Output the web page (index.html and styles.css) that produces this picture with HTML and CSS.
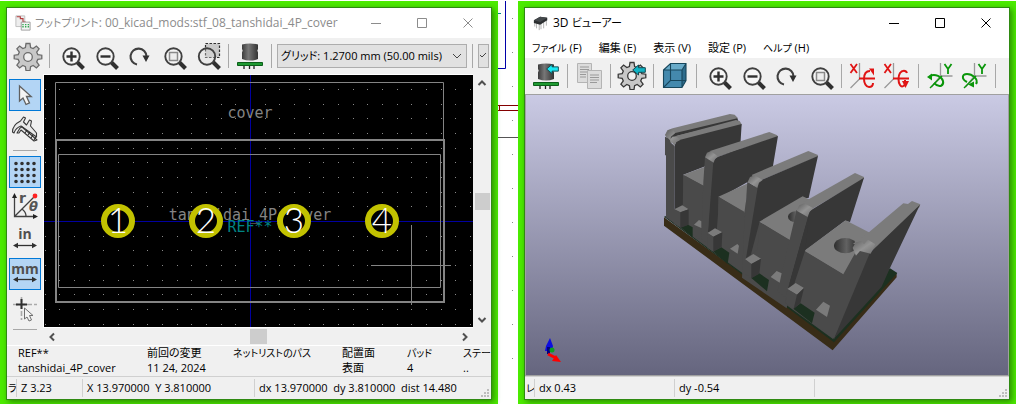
FILE: index.html
```
<!DOCTYPE html>
<html lang="ja">
<head>
<meta charset="utf-8">
<title>フットプリント / 3D ビューアー</title>
<link rel="stylesheet" href="styles.css">
</head>
<body>
<svg class="defs" aria-hidden="true">
  <defs>
    <linearGradient id="metal"><stop offset="0" stop-color="#3c3c3c"/><stop offset=".4" stop-color="#777"/><stop offset="1" stop-color="#333"/></linearGradient>
    <linearGradient id="sky" x1="0" y1="0" x2="0" y2="1"><stop offset="0" stop-color="#cacae4"/><stop offset="1" stop-color="#65657e"/></linearGradient>
    <linearGradient id="hole"><stop offset="0" stop-color="#2e2e2e"/><stop offset=".55" stop-color="#626262"/><stop offset="1" stop-color="#333"/></linearGradient>
    <linearGradient id="bevel" x1="0" y1="0" x2="1" y2="1"><stop offset="0" stop-color="#5c5c5c"/><stop offset=".5" stop-color="#949494"/><stop offset="1" stop-color="#6a6a6a"/></linearGradient>
    <pattern id="grid" x="206" y="89" width="44" height="44" patternUnits="userSpaceOnUse">
      <path fill="#8a8a8a" d="M0 0h1v1H0zM15 0h1v1h-1zM29 0h1v1h-1zM0 15h1v1H0zM15 15h1v1h-1zM29 15h1v1h-1zM0 29h1v1H0zM15 29h1v1h-1zM29 29h1v1h-1z"/>
    </pattern>
  </defs>
  <symbol id="i-gear" viewBox="0 0 32 32"><path d="M14 4.500h4l.6 4 2.600 1.100 3.200-2.500 2.700 2.700-2.400 3.300 1.100 2.500 4 .6v3.600l-4 .6-1.100 2.600 2.400 3.200-2.700 2.700-3.200-2.400-2.600 1.100-.6 4h-4l-.6-4-2.600-1.100-3.200 2.400-2.700-2.700 2.400-3.200-1.100-2.600-4-.6v-3.600l4-.6 1.100-2.500-2.400-3.300 2.700-2.700 3.200 2.500 2.600-1.100z" fill="#c8c8c8" stroke="currentColor" stroke-width="1.300"/><circle cx="16" cy="18" r="4.300" fill="#f0f0f0" stroke="currentColor" stroke-width="1.300"/></symbol>
  <symbol id="i-lens" viewBox="0 0 32 32"><path d="M22 22l6.500 6.500" stroke="#303030" stroke-width="4"/><circle cx="16.500" cy="16.500" r="8.200" fill="#f7f7f7" fill-opacity=".7" stroke="#404040" stroke-width="1.900"/></symbol>
  <symbol id="i-in" viewBox="0 0 32 32"><use href="#i-lens"/><path d="M11.500 16.500h10M16.500 11.500v10" stroke="#303030" stroke-width="2.400"/></symbol>
  <symbol id="i-out" viewBox="0 0 32 32"><use href="#i-lens"/><path d="M11.500 16.500h10" stroke="#303030" stroke-width="2.400"/></symbol>
  <symbol id="i-redo" viewBox="0 0 32 32"><path d="M14 24.500a8 8 0 1 1 9.500-8" fill="none" stroke="#404040" stroke-width="2.100"/><path d="M19.500 15.500h7l-3.500 6.500z" fill="#303030"/></symbol>
  <symbol id="i-fit" viewBox="0 0 32 32"><use href="#i-lens"/><path d="M12.500 12.500h8v8h-8z" fill="#ededed" stroke="#8a8a8a" stroke-width="1.500"/></symbol>
  <symbol id="i-area" viewBox="0 0 32 32"><path d="M14.500 3.500h14v14h-14z" fill="#c9c9c9" stroke="#303030" stroke-width="1.200" stroke-dasharray="2.500 1.500"/><path d="M22 22l6.500 6.500" stroke="#303030" stroke-width="4"/><circle cx="16" cy="16.500" r="8.200" fill="#ddd" fill-opacity=".35" stroke="#404040" stroke-width="1.900"/></symbol>
  <symbol id="i-part" viewBox="0 0 32 32"><path d="M10 23v6M15.500 23v6M20 23v6" stroke="#222" stroke-width="1.300"/><path d="M8 4.500q8-2 16 0V9l-.7 1.500.7 2V19q-8 3-16 0v-6.500l.7-2L8 9z" fill="url(#metal)"/><path d="M3.500 22.500h25v3h-25z" fill="#1f9a32" stroke="#0c5f1a"/></symbol>
  <symbol id="i-back" viewBox="0 0 14 12"><path d="M.7 6l5.800-5v2.700h6.800v4.600H6.500V11z" fill="currentColor" stroke="#124850"/></symbol>
  <symbol id="i-copy" viewBox="0 0 32 32"><g fill="#dcdcdc" stroke="#b4b4b4"><path d="M4.500 3.500h14v19h-14z"/><path d="M14.500 10.500h14v18h-14z"/></g><path d="M7 7h9M7 9.500h9M7 12h7M7 14.500h6M7 17h6M17 15h9M17 17.500h9M17 20h9M17 22.500h7" stroke="#999" stroke-width="1.200"/></symbol>
  <symbol id="i-cube" viewBox="0 0 32 32"><path d="M4.500 10l7-6.500H27L23 10z" fill="#69abc9"/><path d="M4.500 10H23v17.500H4.500z" fill="#4489ad"/><path d="M23 10l4-6.500v17l-4 7z" fill="#2d6c8c"/><path d="M4.500 10l7-6.500H27v17l-4 7H4.500zM4.500 10H23l4-6.500M23 10v17.500M11.500 3.500v17l-7 7M11.500 20.500H27" fill="none" stroke="#17465c" stroke-width="1.100"/></symbol>
  <symbol id="i-rx" viewBox="0 0 32 32"><path d="M12.500 3v16l-9 9" fill="none" stroke="#999" stroke-width="1.300"/><path d="M3.500 4l6.500 9M10 4l-6.500 9M12 18.500h16" stroke="#e01414" stroke-width="1.800"/></symbol>
  <symbol id="i-ry" viewBox="0 0 32 32"><path d="M16.500 3v13h12M16.500 16l-9 11" fill="none" stroke="#999" stroke-width="1.300"/><path d="M20.500 4l3.500 5 3.500-5M24 9v5" fill="none" stroke="#0a960a" stroke-width="1.800"/><path d="M6 28L18 16" stroke="#0a960a" stroke-width="1.400"/></symbol>
  <symbol id="i-cursor" viewBox="0 0 32 32"><path d="M10.500 7v15l3.500-3 3 6.500 3.500-1.600-3-6.400h4.700z" fill="#f4f4f4" stroke="#606060" stroke-width="1.300"/></symbol>
</svg>

<main class="desktop">
  <section class="frame" aria-label="フットプリント">
    <div class="window">
      <header class="titlebar inactive">
        <svg class="app" viewBox="0 0 18 18"><path d="M1 1h10v12H1z" fill="#eee" stroke="#bbb"/><path d="M2 2h4v2h3v4h3" fill="none" stroke="#b13c3c" stroke-width="1.300"/><path d="M7 8h10v9H7z" fill="#f4f4f4" stroke="#999"/><path d="M9 10v5M12 10v5M15 10v5" stroke="#35a853" stroke-width="1.600" stroke-dasharray="1.500 1"/></svg>
        <h1><span class="ja">フットプリント</span>: 00_kicad_mods:stf_08_tanshidai_4P_cover</h1>
        <button aria-label="最小化"><svg viewBox="0 0 10 10"><path d="M0 5.500h10"/></svg></button>
        <button aria-label="最大化"><svg viewBox="0 0 10 10"><path d="M.5.5h9v9h-9z"/></svg></button>
        <button aria-label="閉じる"><svg viewBox="0 0 10 10"><path d="M.5.5l9 9M9.500.5l-9 9"/></svg></button>
      </header>
      <div class="toolbar" role="toolbar">
        <button aria-label="設定"><svg class="gear"><use href="#i-gear" y="-1"/></svg></button>
        <i class="sep"></i>
        <button aria-label="ズームイン"><svg><use href="#i-in"/></svg></button>
        <button aria-label="ズームアウト"><svg><use href="#i-out"/></svg></button>
        <button aria-label="再描画"><svg><use href="#i-redo"/></svg></button>
        <button aria-label="全体表示"><svg><use href="#i-fit"/></svg></button>
        <button aria-label="範囲ズーム"><svg><use href="#i-area"/></svg></button>
        <i class="sep"></i>
        <button aria-label="3D ビューアー"><svg><use href="#i-part"/></svg></button>
        <i class="sep"></i>
        <select class="grid-select" aria-label="グリッド"><option>グリッド: 1.2700 mm (50.00 mils)</option></select>
        <i class="sep"></i>
        <select class="zoom-select" aria-label="ズーム"><option></option></select>
      </div>
      <div class="workspace">
        <div class="sidebar" role="toolbar">
          <button class="on" aria-label="選択"><svg><use href="#i-cursor"/></svg></button>
          <button aria-label="計測"><svg viewBox="0 0 32 32"><g fill="#e8e8e8" stroke="#383838" stroke-width="1.100" stroke-linejoin="round"><path d="M3.500 19c0-5 4-9 8-11l3-4 2 1-2 4 3 3 3-5 2 1-1 5 6 7v4L12 13c-3 1-6 4-7 7z"/><path d="M8 20l3-5 2-1 15 13-3 1-13-11-2 3z"/></g><path d="M16 20l2-3M19 22l2-3M22 25l2-3M25 27l2-3" stroke="#222"/></svg></button>
          <i class="hsep"></i>
          <button class="on" aria-label="グリッド表示"><svg viewBox="0 0 32 32"><path d="M7 7.500h20M7 13.500h20M7 19.500h20M7 25.500h20" stroke="#303030" stroke-width="3.600" stroke-linecap="round" stroke-dasharray="0 6"/></svg></button>
          <button aria-label="極座標"><svg viewBox="0 0 32 32"><path d="M5.500 6v20.500H27M5.500 26.500L25 7M13 19q4 3 4 7" fill="none" stroke="#404040" stroke-width="1.300"/><path d="M5.500 3l2.500 5H3zM29 26.500L24 24v5z" fill="#222"/><circle cx="26" cy="6" r="2.400" fill="#f22"/><text x="10" y="13" class="glyph">r</text><text x="20" y="21" class="glyph it">θ</text></svg></button>
          <button aria-label="インチ"><svg viewBox="0 0 32 32"><text x="16" y="15" class="unit">in</text><path d="M6 21.500h20" stroke="#303030" stroke-width="1.300"/><path d="M4 21.500l5-2.700v5.400zM28 21.500l-5-2.700v5.400z" fill="#303030"/></svg></button>
          <button class="on" aria-label="ミリメートル"><svg viewBox="0 0 32 32"><text x="16" y="16" class="unit">mm</text><path d="M6 21.500h20" stroke="#303030" stroke-width="1.300"/><path d="M4 21.500l5-2.700v5.400zM28 21.500l-5-2.700v5.400z" fill="#303030"/></svg></button>
          <button aria-label="カーソル形状"><svg viewBox="0 0 32 32"><path d="M4 12.500h24M12.500 5v23" stroke="#aaa" stroke-width="1.600" stroke-dasharray="5 2"/><path d="M7 12.500h11M12.500 7v10" stroke="#303030" stroke-width="2"/><path d="M15.500 16v11l2.500-2 2 4 2.500-1-2-4.500h3.500z" fill="#f4f4f4" stroke="#707070"/></svg></button>
          <i class="hsep"></i>
        </div>
        <svg class="pcb" viewBox="44 75 429 260" preserveAspectRatio="xMinYMin slice" role="img" aria-label="フットプリント図">
          <path fill="#000" d="M44 75h429v260H44z"/>
          <path fill="url(#grid)" d="M44 75h429v260H44z"/>
          <path d="M44 221.500h429M250.500 75v260" stroke="#0000a0"/>
          <text x="250" y="118" class="silk">cover</text>
          <text x="250" y="220" class="silk">tanshidai_4P_cover</text>
          <g fill="none" stroke="#848484">
            <path d="M55.500 139V82.500h388V139M58.500 154.500h382v133h-382z"/>
            <path stroke-width="2" d="M56 140h388v162H56z"/>
            <path d="M411.500 225v80M371 265.500h80"/>
          </g>
          <text x="250" y="232" class="silk ref">REF**</text>
          <g fill="#000" stroke="#c2c200" stroke-width="6"><circle cx="118" cy="221" r="14"/><circle cx="206" cy="221" r="14"/><circle cx="294" cy="221" r="14"/><circle cx="382" cy="221" r="14"/></g>
          <g class="pads"><text x="118" y="233">1</text><text x="206" y="233">2</text><text x="294" y="233">3</text><text x="382" y="233">4</text></g>
        </svg>
        <div class="vscroll"><button aria-label="上へ"><svg viewBox="0 0 10 10"><path d="M1.500 7L5 3.500 8.500 7"/></svg></button><i></i><button aria-label="下へ"><svg viewBox="0 0 10 10"><path d="M1.500 3L5 6.500 8.500 3"/></svg></button></div>
        <div class="hscroll"><button aria-label="左へ"><svg viewBox="0 0 10 10"><path d="M7 1.500L3.500 5 7 8.500"/></svg></button><i></i><button aria-label="右へ"><svg viewBox="0 0 10 10"><path d="M3 1.500L6.500 5 3 8.500"/></svg></button></div>
      </div>
      <dl class="messages">
        <div><dt>REF**</dt><dd>tanshidai_4P_cover</dd></div>
        <div><dt>前回の変更</dt><dd>11 24, 2024</dd></div>
        <div><dt class="ja">ネットリストのパス</dt><dd></dd></div>
        <div><dt>配置面</dt><dd>表面</dd></div>
        <div><dt class="ja">パッド</dt><dd>4</dd></div>
        <div><dt class="ja">ステー</dt><dd>..</dd></div>
      </dl>
      <footer class="status status-a"><span class="ja">ラ</span><span>Z 3.23</span><span>X 13.970000&nbsp; Y 3.810000</span><span>dx 13.970000&nbsp; dy 3.810000&nbsp; dist 14.480</span>
        <svg class="grip" viewBox="0 0 8 8"><path d="M6 0h2v2H6zM3 3h2v2H3zM6 3h2v2H6zM0 6h2v2H0zM3 6h2v2H3zM6 6h2v2H6z"/></svg></footer>
    </div>
  </section>

  <svg class="gap" viewBox="0 0 20 403" preserveAspectRatio="xMidYMin slice" aria-hidden="true">
    <path d="M0 67.500h7.500V0" fill="none" stroke="#0000a8"/>
    <path d="M0 12.500h3" stroke="#008484"/>
    <path d="M0 104.500h20M0 109.500h20M1.500 104v6" fill="none" stroke="#840000"/>
    <path d="M0 136.500h20" stroke="#555"/>
    <path d="M14.500 17v370" stroke="#888" stroke-dasharray="1 33"/>
  </svg>

  <section class="frame" aria-label="3D ビューアー">
    <div class="window">
      <header class="titlebar">
        <svg class="app" viewBox="0 0 18 18"><path d="M2 7v6M4 9v6M7 9v8M9 8v8M12 7v8M15 5v7" stroke="#aaa"/><path d="M1 6l7-4 8 1v3l-8 5-7-2z" fill="#2c2f31"/><path d="M1 6l7-4 8 1-8 5z" fill="#45494c"/></svg>
        <h1>3D <span class="ja">ビューアー</span></h1>
        <button aria-label="最小化"><svg viewBox="0 0 10 10"><path d="M0 5.500h10"/></svg></button>
        <button aria-label="最大化"><svg viewBox="0 0 10 10"><path d="M.5.5h9v9h-9z"/></svg></button>
        <button aria-label="閉じる"><svg viewBox="0 0 10 10"><path d="M.5.5l9 9M9.500.5l-9 9"/></svg></button>
      </header>
      <nav class="menu"><button><span class="ja">ファイル</span> (F)</button><button>編集 (E)</button><button>表示 (V)</button><button>設定 (P)</button><button><span class="ja">ヘルプ</span> (H)</button></nav>
      <div class="toolbar" role="toolbar">
        <button aria-label="再読み込み"><svg><use href="#i-part"/><use href="#i-back" x="16" y="3" width="13" height="12" color="#19e8f4"/></svg></button>
        <i class="sep"></i>
        <button aria-label="コピー"><svg><use href="#i-copy"/></svg></button>
        <i class="sep"></i>
        <button aria-label="オプション"><svg class="gear dark"><use href="#i-gear" y="-2"/><use href="#i-back" x="16" y="4" width="14" height="12" color="#0fb3c4"/></svg></button>
        <i class="sep"></i>
        <button aria-label="正投影"><svg><use href="#i-cube"/></svg></button>
        <i class="sep"></i>
        <button aria-label="ズームイン"><svg><use href="#i-in"/></svg></button>
        <button aria-label="ズームアウト"><svg><use href="#i-out"/></svg></button>
        <button aria-label="再描画"><svg><use href="#i-redo"/></svg></button>
        <button aria-label="全体表示"><svg><use href="#i-fit"/></svg></button>
        <i class="sep"></i>
        <button aria-label="X 回転"><svg viewBox="0 0 32 32"><use href="#i-rx"/><path d="M23 11c-5 0-6 4-6 8s2 8 5 8 4-2 4-4" fill="none" stroke="#e01414" stroke-width="2"/><path d="M22 8.500h5v7z" fill="#e01414"/></svg></button>
        <button aria-label="X 逆回転"><svg viewBox="0 0 32 32"><use href="#i-rx"/><path d="M26 13c-1-3-5-3-7 0s-2 9 0 12 3 1 5 0v-5" fill="none" stroke="#e01414" stroke-width="2"/><path d="M21 21h7l-3.500 7z" fill="#e01414"/></svg></button>
        <i class="sep"></i>
        <button aria-label="Y 回転"><svg viewBox="0 0 32 32"><use href="#i-ry"/><path d="M6 16c5-3 12 1 13 5s-3 8-9 2" fill="none" stroke="#0a960a" stroke-width="2"/><path d="M3 17l5-3.500v7z" fill="#0a960a"/></svg></button>
        <button aria-label="Y 逆回転"><svg viewBox="0 0 32 32"><use href="#i-ry"/><path d="M9 22c-6-3-5-8 0-8s12 5 9 10" fill="none" stroke="#0a960a" stroke-width="2"/><path d="M10 24.500l6-3v6z" fill="#0a960a"/></svg></button>
        <i class="sep"></i>
      </div>
      <svg class="view3d" viewBox="526 95 482 281" preserveAspectRatio="xMinYMin slice" role="img" aria-label="3D モデル">
        <path fill="url(#sky)" d="M526 95h482v281H526z"/>
        <g transform="translate(650 100) scale(.3333)">
          <path fill="#382c17" d="M42 352L550 718l190-200v14L548 751 42 377z"/>
          <path fill="#1c3020" d="M42 350l58-20 450 330 170-155 22 14-190 208z"/>
          <path fill="#4a4a4a" d="M75 330l25-105 60 15 45 50 80 10 43 66 80 30 60 56 110 70-28 196L48 352z"/>
          <!-- leftmost double wall -->
          <path fill="#7b7b7b" d="M45 105l7-14 16-6L240 42l14 2 9 9-4 14-180 42-18 24z"/>
          <path fill="#373737" d="M62 110l14-11 186-44 3 8-185 44-17 14z"/>
          <path fill="#7b7b7b" d="M60 118l8-8 10-2 180-48 11 3 6 10-2 8-190 50z"/>
          <path fill="#373737" d="M73 140l4-12 11-8 187-48-5 80-65 15-43 33-62 24-2 115H73z"/>
          <path fill="#4a4a4a" d="M45 110l15 8v8l13 11-1 190 28-5v65L48 352V166h-3z"/>
          <path fill="url(#bevel)" d="M46 105l8-14 13-4 8 12-13 12-2 10zM60 120l7-10 15 2 9 8-12 5-6 12z"/>
          <!-- block and wall 1 -->
          <path fill="#7b7b7b" d="M100 224l65-24v60z"/>
          <path fill="#4a4a4a" d="M100 225l62 33-6 165-56-39z"/>
          <path fill="#7b7b7b" d="M180 153L358 96l24 10v5l-180 60z"/>
          <path fill="#373737" d="M200 172l184-64-16 96-160 90-8 100-26 2 12-210z"/>
          <path fill="#7b7b7b" d="M205 290l92-42-14 90z"/>
          <path fill="#4a4a4a" d="M165 170l25 15-16 210 30 25v35l-50-38 6-170zM205 290l78 45 5 190-86-64z"/>
          <path fill="url(#bevel)" d="M165 172l6-14 12-5 22 17-10 6-4 12z"/>
          <!-- block and wall 2 -->
          <path fill="#7b7b7b" d="M305 225l170-72 29 12-1 5-180 75z"/>
          <path fill="#373737" d="M320 246l184-78-28 126-18 0-130 75-28 105-15 2 25-210z"/>
          <path fill="#7b7b7b" d="M328 365l130-76 30 14-66 120z"/>
          <ellipse fill="url(#hole)" cx="436" cy="350" rx="22" ry="16"/>
          <path fill="#4a4a4a" d="M292 245l31 18-35 212 40-30 92 140-10 40-134-92 6-140zM328 366l93 55-6 170-95-100z"/>
          <path fill="url(#bevel)" d="M293 246l7-15 14-5 24 14-11 8-5 16z"/>
          <!-- block and wall 3 -->
          <path fill="#7b7b7b" d="M455 310l160-91 27 12v5L485 328z"/>
          <path fill="#373737" d="M480 332l162-99-42 133-15-4-122 92-32 100-17 10 55-215z"/>
          <path fill="#7b7b7b" d="M462 453l125-92 74 38 30 30-110 95z"/>
          <ellipse fill="url(#hole)" cx="586" cy="437" rx="34" ry="23"/>
          <path fill="#4a4a4a" d="M440 330l34 20-62 215 52-112 116 70 50-90 40 30-117 253-147-106z"/>
          <path fill="#4a4a4a" d="M440 330l34 20-60 215-2 30-30-20z"/>
          <path fill="#373737" d="M474 352l-60 214 18-12 34-104 10-98z"/>
          <path fill="url(#bevel)" d="M440 332l8-16 15-6 27 15-11 10-6 16z"/>
          <!-- right wall -->
          <path fill="#7b7b7b" d="M655 398l105-88 14 2 12-9 25 10-2 8-134 130-66-20z"/>
          <path fill="#373737" d="M810 314l-90 190-25 56-143 156 108-258z"/>
          <path fill="url(#bevel)" d="M608 443l10-16 16-4 8 10 12-14 22 14-14 28-32-8-12 14z"/>
          <!-- terminal slots -->
          <path fill="#1c3020" d="M92 382l22-8 14 8v30zM190 454l24-12 24 16-5 34zM304 534l24-14 29 20-6 34zM430 626l22-16 42 28-8 32z"/>
          <path fill="#7b7b7b" d="M73 328l24-12 19 12-25 9zM173 399l22-14 22 12-27 13zM285 478l25-16 23 14-29 16zM412 567l25-18 25 15-21 20z"/>
          <path fill="#4a4a4a" d="M73 328l18 9v45l-18-10zM172 399l18 11v45l-18-12zM285 478l19 14v43l-19-14zM412 567l29 17-10 43-24-18z"/>
          <path fill="#373737" d="M91 337l25-9v46l-25 10zM190 410l27-13-2 44-25 14zM304 492l29-16-5 45-24 14zM441 584l21-20-11 46-20 17z"/>
          <path fill="#7b7b7b" d="M132 374l15-14 7 4v20zM240 446l22-14 5 5-4 24zM362 531l18-18 15 7-6 28zM498 629l22-24 20 12-9 34z"/>
        </g>
        <path fill="#0d0de0" d="M550 338l3 8-1 5h-7l1-5z"/><path fill="#000080" d="M547 347h3v7h-3z"/><path d="M548 354l8 4" stroke="#f00" stroke-width="3"/><path fill="#f00" d="M561 362l-9-1 4-6z"/><circle cx="552" cy="350" r="2.500" fill="#0c9f20"/>
      </svg>
      <footer class="status status-b"><span class="ja">レ</span><span>dx 0.43</span><span>dy -0.54</span><span></span>
        <svg class="grip" viewBox="0 0 8 8"><path d="M6 0h2v2H6zM3 3h2v2H3zM6 3h2v2H6zM0 6h2v2H0zM3 6h2v2H3zM6 6h2v2H6z"/></svg></footer>
    </div>
  </section>
</main>
</body>
</html>
```
FILE: styles.css
```
* { box-sizing: border-box; }

body {
  margin: 0;
  background: #fff;
  color: #000;
  font: 11px/16px "Open Sans", "Noto Sans CJK JP", sans-serif;
  font-feature-settings: "palt";
}

button, select {
  margin: 0;
  padding: 0;
  border: 0;
  background: none;
  color: inherit;
  font: inherit;
  font-feature-settings: inherit;
}

.defs { position: absolute; width: 0; height: 0; }
.ja { font-size: 10px; }

.desktop {
  display: flex;
  min-height: 100vh;
  padding-top: 1px;
  background: #fff;
}

.frame {
  flex: 1;
  min-width: 0;
  display: flex;
  padding: 7px 7px 5px;
  background: #4ceb00;
}

.gap { flex: none; width: 20px; contain: size; }

.window {
  flex: 1;
  min-width: 0;
  display: flex;
  flex-direction: column;
  overflow: hidden;
  background: #f0f0f0;
  box-shadow: 0 0 0 1px #2f8a12, 2px 2px 6px 1px #2c8a00;
}

.titlebar {
  display: flex;
  align-items: center;
  flex: none;
  height: 30px;
  padding-left: 8px;
  background: #fff;
}
.titlebar h1 {
  flex: 1;
  min-width: 0;
  margin: 0 0 0 4px;
  overflow: hidden;
  font-size: 12px;
  font-weight: 400;
  white-space: nowrap;
}
.titlebar .app { width: 16px; height: 16px; }
.titlebar .ja { font-size: 11px; }
.titlebar button { flex: none; width: 46px; height: 28px; display: grid; place-items: center; }
.titlebar button svg { width: 10px; height: 10px; fill: none; stroke: #000; }
.inactive { color: #8c8c8c; }
.inactive button svg { stroke: #8c8c8c; }

.menu {
  display: flex;
  align-items: center;
  flex: none;
  gap: 17px;
  height: 20px;
  padding: 0 7px;
  background: #fff;
}

.toolbar {
  display: flex;
  flex: none;
  align-items: center;
  gap: 2px;
  height: 36px;
  padding-left: 5px;
  overflow: hidden;
}
.toolbar button { flex: none; width: 32px; height: 32px; }
.toolbar button svg { display: block; width: 32px; height: 32px; }
.toolbar .gear { color: #6c6c6c; }
.toolbar .dark { color: #383838; }
.sep { flex: none; width: 1px; height: 24px; margin: 0 3px; background: #a8a8a8; }

.grid-select, .zoom-select {
  flex: none;
  height: 24px;
  border: 1px solid #adadad;
  background: #e1e1e1 no-repeat right 5px center;
  appearance: none;
}
.grid-select {
  width: 190px;
  padding-left: 3px;
  background-image: url("data:image/svg+xml,%3Csvg xmlns='http://www.w3.org/2000/svg' width='8' height='6'%3E%3Cpath d='M0 1l4 4 4-4' fill='none' stroke='%23444'/%3E%3C/svg%3E");
}
.zoom-select {
  width: 11px;
  background-position: center;
  background-image: url("data:image/svg+xml,%3Csvg xmlns='http://www.w3.org/2000/svg' width='7' height='6'%3E%3Cpath d='M0 2l2 2 4-4' fill='none' stroke='%23444'/%3E%3C/svg%3E");
}

.workspace {
  flex: 1;
  min-height: 0;
  display: grid;
  grid-template: minmax(0, 1fr) 17px / 36px minmax(0, 1fr) 18px;
}
.sidebar {
  grid-row: 1 / 3;
  display: flex;
  flex-direction: column;
  gap: 2px;
  padding: 5px 2px 0;
}
.sidebar button { flex: none; width: 32px; height: 32px; }
.sidebar button svg { display: block; width: 32px; height: 32px; }
.sidebar .on { background: #b3d5f5; box-shadow: inset 0 0 0 1px #0078d7; }
.hsep { flex: none; height: 1px; margin: 3px 4px; background: #a8a8a8; }
.glyph { fill: #555; font: 700 14px "DejaVu Sans", sans-serif; }
.it { font-style: italic; font-size: 13px; }
.unit { fill: #505050; font: 700 14px "Open Sans", sans-serif; text-anchor: middle; }

.pcb {
  width: 100%;
  height: 100%;
  contain: size;
  border: solid #fff;
  border-width: 1px 0 1px 1px;
}
.silk { fill: #848484; font: 15px "DejaVu Sans Mono", monospace; text-anchor: middle; }
.ref { fill: #008484; }
.pads { fill: #fff; font: 300 35px Lato, sans-serif; text-anchor: middle; }

.vscroll, .hscroll { display: flex; align-items: center; justify-content: space-between; }
.vscroll { flex-direction: column; }
.hscroll { grid-column: 2; }
.vscroll button, .hscroll button { width: 17px; height: 17px; display: grid; place-items: center; }
.vscroll svg, .hscroll svg { width: 10px; height: 10px; fill: none; stroke: #505050; stroke-width: 2; }
.vscroll i { width: 15px; height: 17px; background: #cdcdcd; }
.hscroll i { width: 17px; height: 15px; background: #cdcdcd; }

.messages {
  display: grid;
  grid-template-columns: 129px 86px 109px 65px 56px minmax(0, 1fr);
  flex: none;
  height: 31px;
  margin: 0;
  padding-left: 11px;
  overflow: hidden;
  border-top: 1px solid #fff;
  white-space: nowrap;
}
.messages dt, .messages dd { height: 15px; margin: 0; line-height: 14px; }

.status {
  position: relative;
  display: grid;
  flex: none;
  height: 23px;
  padding: 2px 0;
  border-top: 1px solid #d0d0d0;
  line-height: 18px;
  white-space: nowrap;
}
.status-a { grid-template-columns: 10px 66px 172px minmax(0, 1fr); }
.status-b { grid-template-columns: 10px 140px 140px minmax(0, 1fr); }
.status span { overflow: hidden; padding-left: 4px; border-right: 1px solid #d0d0d0; }
.status span:first-child { padding-left: 1px; }
.status span:last-of-type { border-right: 0; }
.grip { position: absolute; right: 2px; bottom: 2px; width: 8px; height: 8px; fill: #bdbdbd; }

.view3d {
  flex: 1;
  min-height: 0;
  width: 100%;
  contain: size;
  border: 1px solid #a0a0a0;
}
```
